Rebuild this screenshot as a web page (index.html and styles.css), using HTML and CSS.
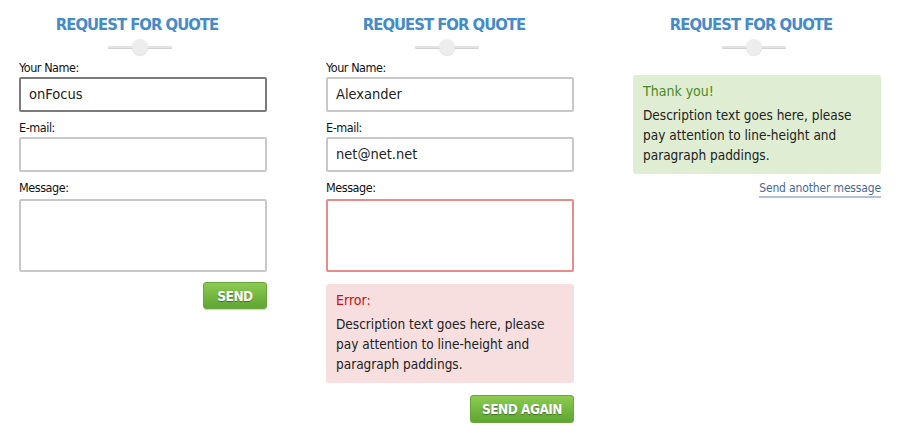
FILE: index.html
```html
<!DOCTYPE html>
<html>
<head>
<meta charset="utf-8">
<link rel="stylesheet" href="styles.css">
</head>
<body>
<div class="page">
  <section class="col">
    <h2 class="title">REQUEST FOR QUOTE</h2>
    <div class="divider"><span class="knob"></span></div>
    <form class="form">
      <label class="label">Your Name:</label>
      <div class="field focus">onFocus</div>
      <label class="label">E-mail:</label>
      <div class="field"></div>
      <label class="label label-msg">Message:</label>
      <div class="field area"></div>
      <div class="actions"><button type="button" class="btn">SEND</button></div>
    </form>
  </section>
  <section class="col">
    <h2 class="title">REQUEST FOR QUOTE</h2>
    <div class="divider"><span class="knob"></span></div>
    <form class="form">
      <label class="label">Your Name:</label>
      <div class="field">Alexander</div>
      <label class="label">E-mail:</label>
      <div class="field">net@net.net</div>
      <label class="label label-msg">Message:</label>
      <div class="field area invalid"></div>
      <div class="notice error">
        <div class="notice-head">Error:</div>
        <p class="notice-text">Description text goes here, please pay attention to line-height and paragraph paddings.</p>
      </div>
      <div class="actions"><button type="button" class="btn btn-wide">SEND AGAIN</button></div>
    </form>
  </section>
  <section class="col">
    <h2 class="title">REQUEST FOR QUOTE</h2>
    <div class="divider"><span class="knob"></span></div>
    <div class="notice success">
      <div class="notice-head">Thank you!</div>
      <p class="notice-text">Description text goes here, please pay attention to line-height and paragraph paddings.</p>
    </div>
    <div class="link-row"><a class="link" href="#">Send another message</a></div>
  </section>
</div>
</body>
</html>
```
FILE: styles.css
```css
html, body {
  margin: 0;
  padding: 0;
  background: #ffffff;
}
body {
  font-family: "DejaVu Sans Condensed", "DejaVu Sans", sans-serif;
  color: #222;
}
.page {
  display: flex;
  gap: 59px;
  padding-left: 19px;
  padding-top: 14px;
}
.col {
  width: 248px;
  display: flex;
  flex-direction: column;
}
.title {
  margin: 0;
  padding-right: 12px;
  height: 21px;
  line-height: 21px;
  text-align: center;
  font-family: "DejaVu Sans Condensed", "DejaVu Sans", sans-serif;
  font-weight: bold;
  font-size: 16.5px;
  letter-spacing: -1px;
  color: #448bc8;
}
.divider {
  margin: 4px 0 0 89px;
  width: 64px;
  height: 16px;
  position: relative;
  display: flex;
  align-items: center;
  justify-content: center;
}
.divider::before {
  content: "";
  position: absolute;
  left: 0;
  right: 0;
  top: 7px;
  height: 2px;
  border-radius: 1px;
  background: #e2e2e2;
  box-shadow: 0 1px 0 #d2d2d2;
}
.knob {
  position: relative;
  width: 16px;
  height: 16px;
  border-radius: 50%;
  background: #ededed;
  box-shadow: 0 1px 1px rgba(0,0,0,0.12);
}
.form {
  display: flex;
  flex-direction: column;
  margin-top: 5px;
}
.label {
  display: block;
  height: 16px;
  line-height: 16px;
  font-size: 12.5px;
  letter-spacing: -0.45px;
  color: #111;
  margin-bottom: 1px;
}
.label-msg {
  margin-bottom: 3px;
}
.field {
  box-sizing: border-box;
  height: 35px;
  border: 2px solid #c8c8c8;
  border-radius: 2px;
  padding: 0 8px;
  line-height: 31px;
  font-size: 14.5px;
  color: #222;
  margin-bottom: 8px;
  background: #fff;
}
.field.focus {
  border-color: #7b7b7b;
}
.field.area {
  height: 73px;
  margin-bottom: 0;
}
.field.invalid {
  border-color: #e88b8b;
}
.actions {
  display: flex;
  justify-content: flex-end;
  margin-top: 10px;
}
.btn {
  box-sizing: border-box;
  height: 27px;
  width: 64px;
  padding: 0;
  border: 1px solid #6aa53e;
  border-radius: 3px;
  background: linear-gradient(#8ccb50, #5ea532);
  box-shadow: 0 1px 1px rgba(0,0,0,0.2);
  color: #fff;
  font-family: "DejaVu Sans Condensed", "DejaVu Sans", sans-serif;
  font-weight: bold;
  font-size: 13.5px;
  letter-spacing: -0.5px;
  text-shadow: 0 1px 1px rgba(0,0,0,0.35);
}
.btn-wide {
  width: 104px;
  height: 28px;
}
.notice {
  box-sizing: border-box;
  border-radius: 3px;
  padding: 6px 10px 9px;
  font-size: 13.5px;
  line-height: 20px;
  height: 99px;
}
.form .notice {
  margin-top: 12px;
}
.form .notice + .actions {
  margin-top: 12px;
}
.notice-head {
  height: 20px;
  font-size: 14px;
}
.notice-text {
  margin: 4px 0 0;
  color: #222;
}
.error {
  background: #f7dfe0;
}
.error .notice-head {
  color: #cc1010;
}
.success {
  margin-top: 20px;
  background: #dfedd3;
}
.success .notice-head {
  color: #4b8a25;
}
.link-row {
  display: flex;
  justify-content: flex-end;
  margin-top: 7px;
}
.link {
  font-size: 12px;
  letter-spacing: -0.15px;
  line-height: 15px;
  color: #4a6896;
  text-decoration: none;
  border-bottom: 2px solid #b3bfd4;
}
```
